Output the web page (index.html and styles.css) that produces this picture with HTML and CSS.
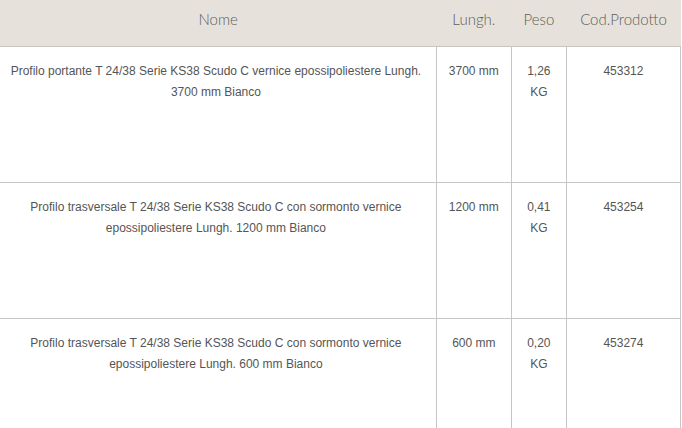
FILE: index.html
```html
<!DOCTYPE html>
<html lang="it">
<head>
<meta charset="utf-8">
<link rel="stylesheet" href="styles.css">
</head>
<body>
<table class="products">
  <thead>
    <tr>
      <th class="c-name">Nome</th>
      <th class="c-len">Lungh.</th>
      <th class="c-wt">Peso</th>
      <th class="c-code">Cod.Prodotto</th>
    </tr>
  </thead>
  <tbody>
    <tr>
      <td class="c-name">Profilo portante T 24/38 Serie KS38 Scudo C vernice epossipoliestere Lungh. 3700 mm Bianco</td>
      <td class="c-len">3700 mm</td>
      <td class="c-wt">1,26 KG</td>
      <td class="c-code">453312</td>
    </tr>
    <tr>
      <td class="c-name">Profilo trasversale T 24/38 Serie KS38 Scudo C con sormonto vernice epossipoliestere Lungh. 1200 mm Bianco</td>
      <td class="c-len">1200 mm</td>
      <td class="c-wt">0,41 KG</td>
      <td class="c-code">453254</td>
    </tr>
    <tr>
      <td class="c-name">Profilo trasversale T 24/38 Serie KS38 Scudo C con sormonto vernice epossipoliestere Lungh. 600 mm Bianco</td>
      <td class="c-len">600 mm</td>
      <td class="c-wt">0,20 KG</td>
      <td class="c-code">453274</td>
    </tr>
  </tbody>
</table>
</body>
</html>
```

FILE: styles.css
```css
html, body {
  margin: 0;
  padding: 0;
  background: #ffffff;
}

.products {
  border-collapse: collapse;
  table-layout: fixed;
  width: 681px;
  font-family: "Liberation Sans", Arial, sans-serif;
}

.products th {
  background: #e6e2db;
  color: #5f5d5a;
  font-family: Lato, "Open Sans", sans-serif;
  font-weight: 300;
  font-size: 15px;
  height: 46px;
  padding: 0 0 7px;
  box-sizing: border-box;
  text-align: center;
  vertical-align: middle;
  border: none;
  border-bottom: 1px solid #c9c6c0;
}

.products td {
  color: #555555;
  font-size: 12px;
  line-height: 21px;
  text-align: center;
  vertical-align: top;
  padding: 14px 7px 0;
  box-sizing: border-box;
  border: 1px solid #c6c6c6;
  border-top: none;
}

.products tbody tr td {
  height: 136px;
}

.products td.c-name {
  border-left: none;
  padding-left: 6px;
  padding-right: 10px;
}

.products .c-name { width: 436px; }
.products .c-len { width: 75px; }
.products .c-wt { width: 55px; }
.products .c-code { width: 114px; }

.products td.c-wt {
  padding-left: 12px;
  padding-right: 12px;
}
```
